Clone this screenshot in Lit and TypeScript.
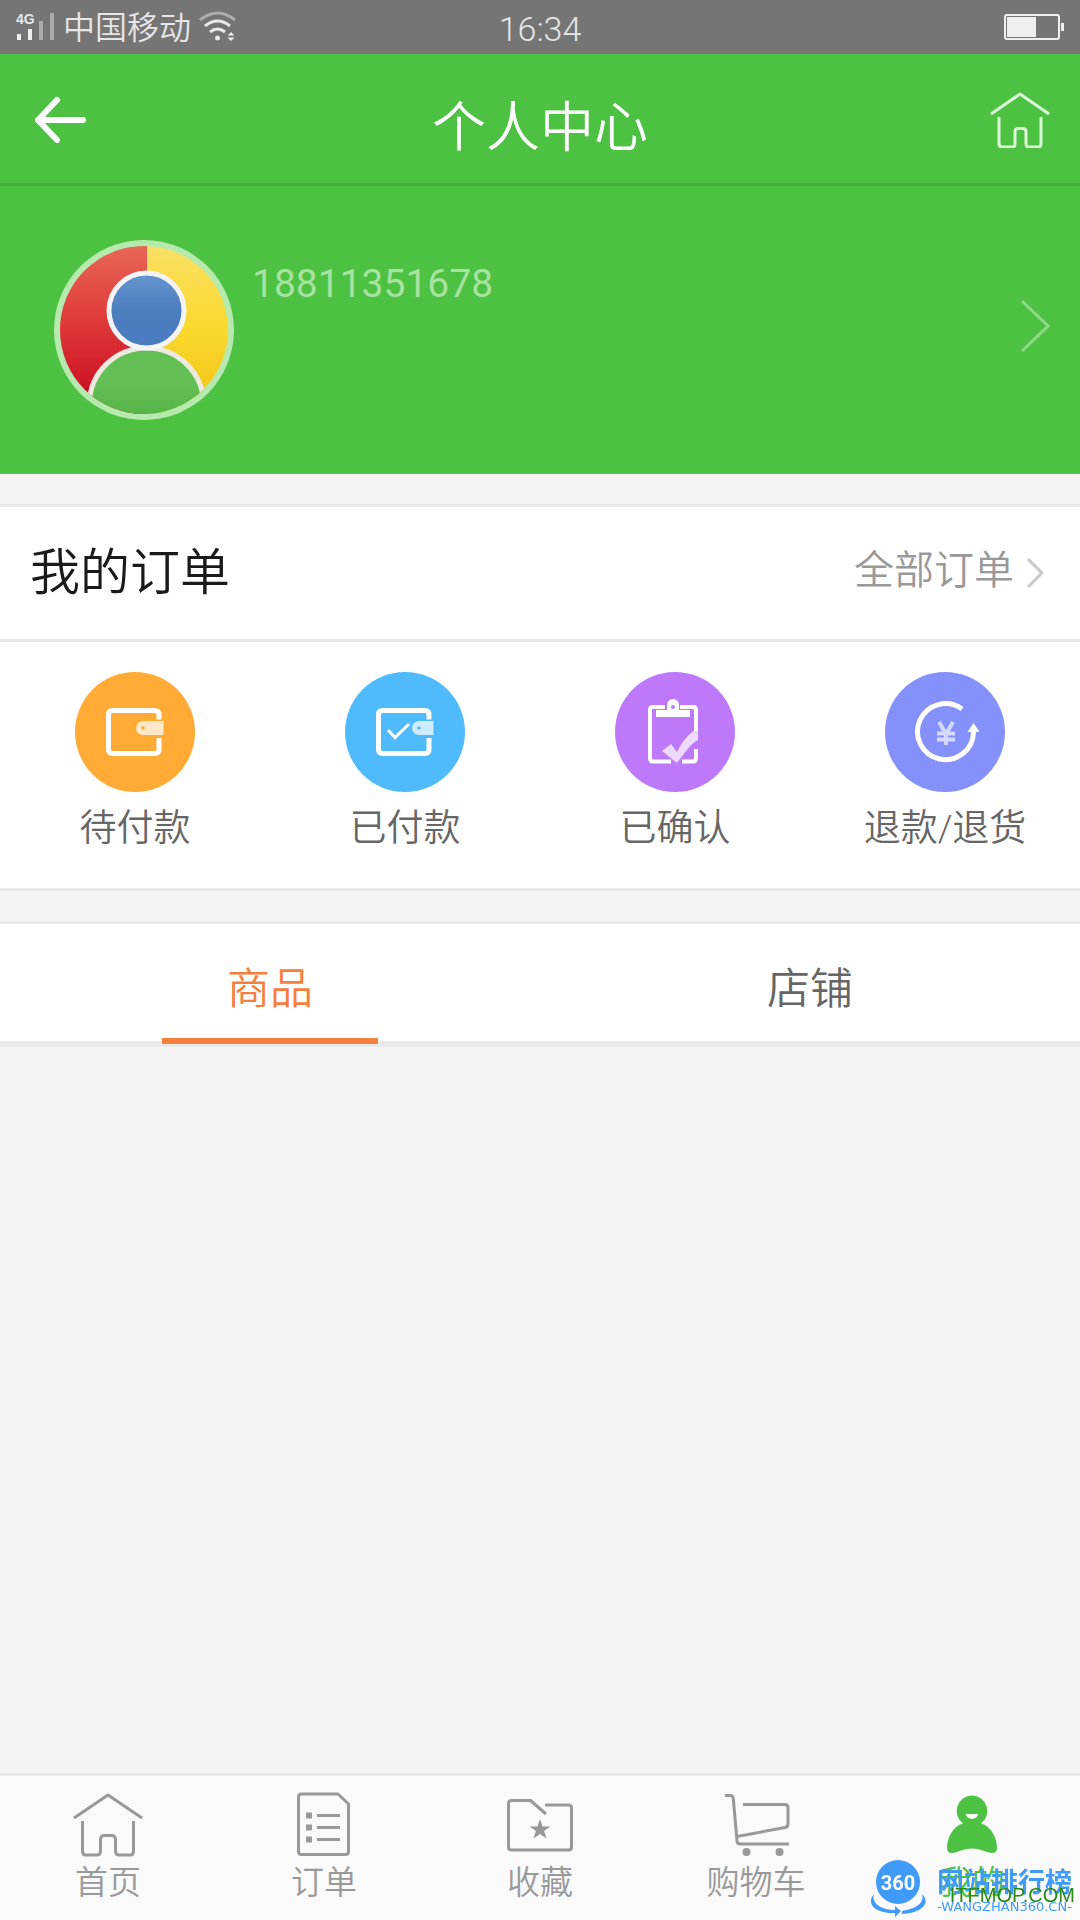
import { LitElement, html, css, svg } from "lit";
import { customElement, state } from "lit/decorators.js";
import { classMap } from "lit/directives/class-map.js";

const houseIcon = html`<svg class="icon" width="72" height="68" viewBox="0 0 72 68" aria-hidden="true">
  <path d="M2 27 36 4 70 27" />
  <path d="M10.500 30V60q0 4 3 4H25q3.500 0 3.500-4V49q0-4.500 3.500-4.500h8q3.500 0 3.500 4.500V60q0 4 3.500 4H58.500q3 0 3-4V30" />
</svg>`;

const headerHouseIcon = html`<svg width="60" height="58" viewBox="0 0 60 58" aria-hidden="true" class="icon">
  <path d="M1 24 30 4 59 24" />
  <path d="M9 27V53q0 4 3 4h10q3 0 3-3V42q0-3.500 3-3.500h5q3 0 3 3.500V54q0 3 3 3h9q3 0 3-3V27" />
</svg>`;

const sheetIcon = html`<svg class="icon" width="72" height="68" viewBox="0 0 72 68" aria-hidden="true">
  <path d="M13.500 3H50L60.500 13V60.500q0 3-3 3H13.500q-3 0-3-3V6q0-3 3-3Z" />
  <path d="M29 24.500H52M29 36.500H52M29 48.500H52" />
  <path class="solid" d="M18 21.500h6v6h-6zM18 33.500h6v6h-6zM18 45.500h6v6h-6z" />
</svg>`;

const folderIcon = html`<svg class="icon" width="72" height="68" viewBox="0 0 72 68" aria-hidden="true">
  <path d="M42 23 26.500 9.500H7.500q-3 0-3 3V56q0 3 3 3H64.500q3 0 3-3V17q0-3-3-3H41" />
  <path class="solid" d="M36 28l2.600 7.500h7.800l-6.300 4.600 2.400 7.400-6.500-4.600-6.500 4.600 2.400-7.400-6.300-4.600h7.800z" />
</svg>`;

const cartIcon = html`<svg class="icon" width="72" height="68" viewBox="0 0 72 68" aria-hidden="true">
  <path d="M5 4.500h5q3 0 3.300 3L17 50q.4 3 3 3H69M23 13.500H65q3 0 3 3V33q0 3-3 3.500L17 45.500" />
  <circle class="solid" cx="26.500" cy="61" r="4" /><circle class="solid" cx="59.500" cy="61" r="4" />
</svg>`;

const personIcon = html`<svg class="icon" width="72" height="68" viewBox="0 0 72 68" aria-hidden="true">
  <path class="fill" d="M36 4.500a15.500 15.500 0 0 1 9 28C55 35 61 47 61 57q0 5-5 5c-5 0-11-4.500-20-4.500S21 62 16 62q-5 0-5-5c0-10 6-22 16-24.500a15.500 15.500 0 0 1 9-28Z" />
  <path class="smile" d="M30 23H42a6 5 0 0 1-12 0Z" />
</svg>`;

const wallet = svg`
  <path d="M84 47.500V42.500q0-4-4-4H37.500q-4 0-4 4V77.500q0 4 4 4H80q4 0 4-4V66" />`;

const orderKinds = [
  {
    label: "待付款", tone: "orange",
    art: svg`${wallet}
      <path class="tint" d="M68 49H88.500V63H68a7 7 0 0 1 0-14Z" />
      <circle class="dot" cx="68" cy="56" r="1.800" />`,
  },
  {
    label: "已付款", tone: "blue",
    art: svg`${wallet}
      <path class="tint" d="M74 49H88.500V63H74a7 7 0 0 1 0-14Z" />
      <circle class="dot" cx="74" cy="56" r="1.800" />
      <path class="check" d="M43 58l7 7.500L64 52" />`,
  },
  {
    label: "已确认", tone: "purple",
    art: svg`
      <path class="thin" d="M50 35H38q-3 0-3 3V86q0 3.500 3 3.500H56M65 35H78q3 0 3 3V59M81 77v9q0 3.500-3 3.500H67" />
      <path class="white" d="M41 38H52V33a6 6 0 0 1 12 0v5H75v7H41Z" />
      <circle class="dot" cx="58" cy="35" r="2" />
      <path class="tint" d="M47 79l9-7 6 8C67 70 73 62 83 56v12C75 72 69 82 62 91Z" />`,
  },
  {
    label: "退款/退货", tone: "indigo",
    art: svg`
      <path d="M77 37A28 28 0 1 0 88.500 60" />
      <path class="white" d="M88.500 51l6 9H82.500z" />
      <path class="yen" d="M54 50l7 12 7-12M61 61V73M52 61.500H70M52 67.500H70" />`,
  },
];

const navItems = [
  { label: "首页", icon: houseIcon },
  { label: "订单", icon: sheetIcon },
  { label: "收藏", icon: folderIcon },
  { label: "购物车", icon: cartIcon },
  { label: "我的", icon: personIcon },
];

@customElement("app-root")
export class AppRoot extends LitElement {
  static styles = css`
    :host {
      display: flex;
      flex-direction: column;
      min-height: 100vh;
      background: #f4f4f4;
      color: #666;
      font-family: Roboto, "Noto Sans CJK SC", sans-serif;
      font-weight: 350;
    }
    * { box-sizing: border-box; }
    h1, h2, p { margin: 0; font-weight: inherit; }
    a { color: inherit; text-decoration: none; }
    button { margin: 0; padding: 0; border: 0; background: none; color: inherit; font: inherit; cursor: pointer; }
    svg { display: block; flex: none; }
    .icon { fill: none; stroke: currentColor; stroke-width: 3; stroke-linejoin: round; stroke-linecap: butt; }
    .solid { fill: currentColor; stroke: none; }

    .status {
      display: grid;
      grid-template-columns: 1fr auto 1fr;
      align-items: center;
      height: 54px;
      padding: 0 16px;
      background: #757575;
      color: #e6e6e6;
    }
    .carrier { display: flex; align-items: center; gap: 8px; font-size: 32px; line-height: 50px; }
    .carrier-name { padding-top: 2px; }
    .clock { padding-top: 4px; font-size: 34px; line-height: 50px; }
    .battery { justify-self: end; }
    .netlabel { font: 700 14px "Liberation Sans", sans-serif; fill: #e6e6e6; }

    .header {
      display: grid;
      grid-template-columns: 1fr auto 1fr;
      align-items: center;
      height: 132px;
      padding: 0 30px;
      border-bottom: 3px solid #45ac39;
      background: #4dc141;
      color: #fff;
    }
    .title { padding-top: 20px; font-size: 54px; line-height: 80px; }
    .home { justify-self: end; color: #dcf8d8; }

    .profile {
      display: flex;
      align-items: flex-start;
      gap: 18px;
      height: 288px;
      padding: 54px 30px 54px 54px;
      background: #4dc141;
      color: #a6e2a0;
    }
    .phone { flex: 1; padding-top: 20px; font-size: 39px; line-height: 48px; font-weight: 400; }
    .go { align-self: center; margin-bottom: 8px; }

    .orders { margin-top: 30px; border-top: 3px solid #e9e9e9; border-bottom: 3px solid #e9e9e9; background: #fff; }
    .orders-head {
      display: flex;
      align-items: center;
      justify-content: space-between;
      height: 135px;
      padding: 0 36px 0 30px;
      border-bottom: 3px solid #e9e9e9;
    }
    .orders-title { color: #1a1a1a; font-size: 50px; line-height: 60px; }
    .all { display: flex; align-items: center; gap: 12px; color: #999; font-size: 40px; line-height: 48px; }
    .all-label { padding-bottom: 4px; }
    .all-icon { color: #c8c8c8; }
    .kinds { display: grid; grid-template-columns: repeat(4, 1fr); padding: 30px 0 34px; }
    .kind { display: flex; flex-direction: column; align-items: center; gap: 12px; font-size: 37px; line-height: 50px; }
    .disc { width: 120px; height: 120px; border-radius: 50%; fill: none; stroke: #fff; stroke-width: 5; stroke-linecap: butt; }
    .orange { background: #ffab36; color: #ffab36; }
    .blue { background: #4fbbfd; color: #4fbbfd; }
    .purple { background: #bd79fa; color: #bd79fa; }
    .indigo { background: #8491fa; color: #8491fa; }
    .thin { stroke-width: 4; }
    .check { stroke-width: 3; }
    .white { fill: #fff; stroke: none; }
    .tint { fill: #fff; fill-opacity: 0.72; stroke: none; }
    .dot { fill: currentColor; stroke: none; }
    .yen { stroke-width: 4; stroke: #d4d9fd; }

    .tabs {
      display: grid;
      grid-template-columns: 1fr 1fr;
      height: 126px;
      margin-top: 30px;
      border-top: 3px solid #e9e9e9;
      border-bottom: 6px solid #e9e9e9;
      background: #fff;
    }
    .tab {
      display: grid;
      grid-template-rows: 1fr 6px;
      justify-items: center;
      align-items: center;
      height: 120px;
      padding-top: 8px;
      font-size: 43px;
    }
    .tab::after { content: ""; width: 40%; height: 6px; }
    .tab.active { color: #f77f3e; }
    .tab.active::after { background: #f77f3e; }

    .content { flex: 1; }

    .nav {
      display: grid;
      grid-template-columns: repeat(5, 1fr);
      height: 147px;
      border-top: 3px solid #e9e9e9;
      background: #fafafa;
      color: #999;
    }
    .nav-item { display: flex; flex-direction: column; align-items: center; gap: 2px; padding-top: 15px; font-size: 33px; line-height: 44px; }
    .nav-item.current { color: #4dc141; }
    .fill { fill: currentColor; stroke: none; }
    .smile { fill: #fafafa; stroke: none; }

    .mark { position: fixed; right: 5px; bottom: 0; display: flex; align-items: center; gap: 9px; height: 66px; padding-right: 3px; color: #409bf8; }
    .mark-logo { font: 700 20px Roboto, sans-serif; }
    .mark-words { display: flex; flex-direction: column; align-items: center; padding-top: 8px; }
    .mark-name { font-size: 27px; line-height: 32px; font-weight: 700; }
    .mark-site { font: 13px/16px "DejaVu Sans", sans-serif; }
    .mark-host { position: absolute; right: 0; top: 27px; color: #2b8a16; font: 20px/28px "Liberation Sans", sans-serif; }
  `;

  @state() private tab = 0;
  @state() private page = 4;

  render() {
    return html`
      <div class="status">
        <div class="carrier">
          <svg width="39" height="30" viewBox="0 0 39 30" aria-hidden="true">
            <text class="netlabel" x="0" y="12">4G</text>
            <path d="M3 22v6M14 17v11" stroke="#efefef" stroke-width="4" />
            <path d="M25 9v19M36 1v27" stroke="#acacac" stroke-width="4" />
          </svg>
          <span class="carrier-name">中国移动</span>
          <svg width="38" height="32" viewBox="0 0 38 32" fill="none" stroke="#e9e9e9" stroke-width="3" aria-hidden="true">
            <path d="M1 9Q18.500-5 36 9" stroke="#acacac" />
            <path d="M6 15q12.500-10 25 0M11 21q7.500-6 15 0" />
            <circle cx="18.500" cy="27" r="2.500" fill="#e9e9e9" stroke="none" />
            <path d="M28.500 24.500 32 21l3.500 3.500zM28.500 26.500 32 30l3.500-3.500z" fill="#e9e9e9" stroke="none" />
          </svg>
        </div>
        <div class="clock">16:34</div>
        <svg class="battery" width="60" height="26" viewBox="0 0 60 26" role="img" aria-label="电量">
          <rect x="1" y="1" width="54" height="24" rx="2" fill="none" stroke="#efefef" stroke-width="2" />
          <path d="M3 3H32V23H3zM57 9h3v8h-3z" fill="#efefef" />
        </svg>
      </div>

      <header class="header">
        <button class="back" aria-label="返回">
          <svg width="60" height="52" viewBox="0 0 60 52" fill="none" stroke="#fff" stroke-width="6" stroke-linecap="round" stroke-linejoin="round" aria-hidden="true">
            <path d="M27 7 8 27 27 47M8 27H53" />
          </svg>
        </button>
        <h1 class="title">个人中心</h1>
        <a class="home" href="#home" aria-label="首页">${headerHouseIcon}</a>
      </header>

      <a class="profile" href="#profile">
        <svg width="180" height="180" viewBox="0 0 180 180" aria-hidden="true">
          <defs>
            <clipPath id="face"><circle cx="90" cy="90" r="84" /></clipPath>
            <linearGradient id="red" x2="0" y2="1"><stop stop-color="#e96a58" /><stop offset=".45" stop-color="#df3a3a" /><stop offset=".85" stop-color="#cc1023" /></linearGradient>
            <linearGradient id="yellow" x2="0" y2="1"><stop stop-color="#fbe168" /><stop offset=".5" stop-color="#f9d82c" /><stop offset=".85" stop-color="#f4c71c" /></linearGradient>
            <linearGradient id="sky" x2="0" y2="1"><stop stop-color="#6795d1" /><stop offset=".5" stop-color="#4c7dbd" /><stop offset="1" stop-color="#4b7cc3" /></linearGradient>
            <linearGradient id="leaf" x2="0" y2="1"><stop stop-color="#62bd52" /><stop offset=".3" stop-color="#64bf55" /><stop offset=".6" stop-color="#57b548" /></linearGradient>
          </defs>
          <circle cx="90" cy="90" r="90" fill="#b5e9ae" />
          <g clip-path="url(#face)">
            <path d="M0 0H93V180H0z" fill="url(#red)" />
            <path d="M93 0H180V180H93z" fill="url(#yellow)" />
            <ellipse cx="92.500" cy="164" rx="57" ry="56" fill="url(#leaf)" stroke="#ebe9e0" stroke-width="5" />
            <circle cx="92.500" cy="70.500" r="37.500" fill="url(#sky)" stroke="#f4f4f8" stroke-width="5" />
          </g>
        </svg>
        <span class="phone">18811351678</span>
        <svg class="go" width="30" height="54" viewBox="0 0 30 54" fill="none" stroke="#8cdb84" stroke-width="3" aria-hidden="true">
          <path d="M2 2 28 27 2 52" />
        </svg>
      </a>

      <section class="orders">
        <div class="orders-head">
          <h2 class="orders-title">我的订单</h2>
          <a class="all" href="#orders">
            <span class="all-label">全部订单</span>
            <svg class="icon all-icon" width="18" height="32" viewBox="0 0 18 32" aria-hidden="true"><path d="M2 2 16 16 2 30" /></svg>
          </a>
        </div>
        <div class="kinds">
          ${orderKinds.map(
            (kind) => html`<a class="kind" href="#orders">
              <svg class="disc ${kind.tone}" viewBox="0 0 120 120" aria-hidden="true">${kind.art}</svg>
              <span>${kind.label}</span>
            </a>`,
          )}
        </div>
      </section>

      <div class="tabs" role="tablist">
        ${["商品", "店铺"].map(
          (label, i) => html`<button
            role="tab"
            class=${classMap({ tab: true, active: this.tab === i })}
            aria-selected=${this.tab === i ? "true" : "false"}
            @click=${() => (this.tab = i)}
          >${label}</button>`,
        )}
      </div>

      <main class="content"></main>

      <nav class="nav">
        ${navItems.map(
          (item, i) => html`<a
            href="#nav"
            class=${classMap({ "nav-item": true, current: this.page === i })}
            @click=${() => (this.page = i)}
          >${item.icon}<span>${item.label}</span></a>`,
        )}
      </nav>

      <div class="mark">
        <svg width="60" height="62" viewBox="0 0 60 62" fill="#409bf8" aria-hidden="true">
          <circle cx="30" cy="26" r="22" />
          <text class="mark-logo" x="30" y="34" text-anchor="middle" fill="#fff">360</text>
          <path d="M6 38C-4 50 12 58 27 57v4l6-6-6-5v4C14 54 3 48 6 38Z" />
          <path d="M54 38C64 48 52 57 34 58V55C48 53 57 47 54 38Z" />
        </svg>
        <div class="mark-words">
          <span class="mark-name">网站排行榜</span>
          <span class="mark-site">-WANGZHAN360.CN-</span>
        </div>
        <span class="mark-host">ITFMOP.COM</span>
      </div>
    `;
  }
}
